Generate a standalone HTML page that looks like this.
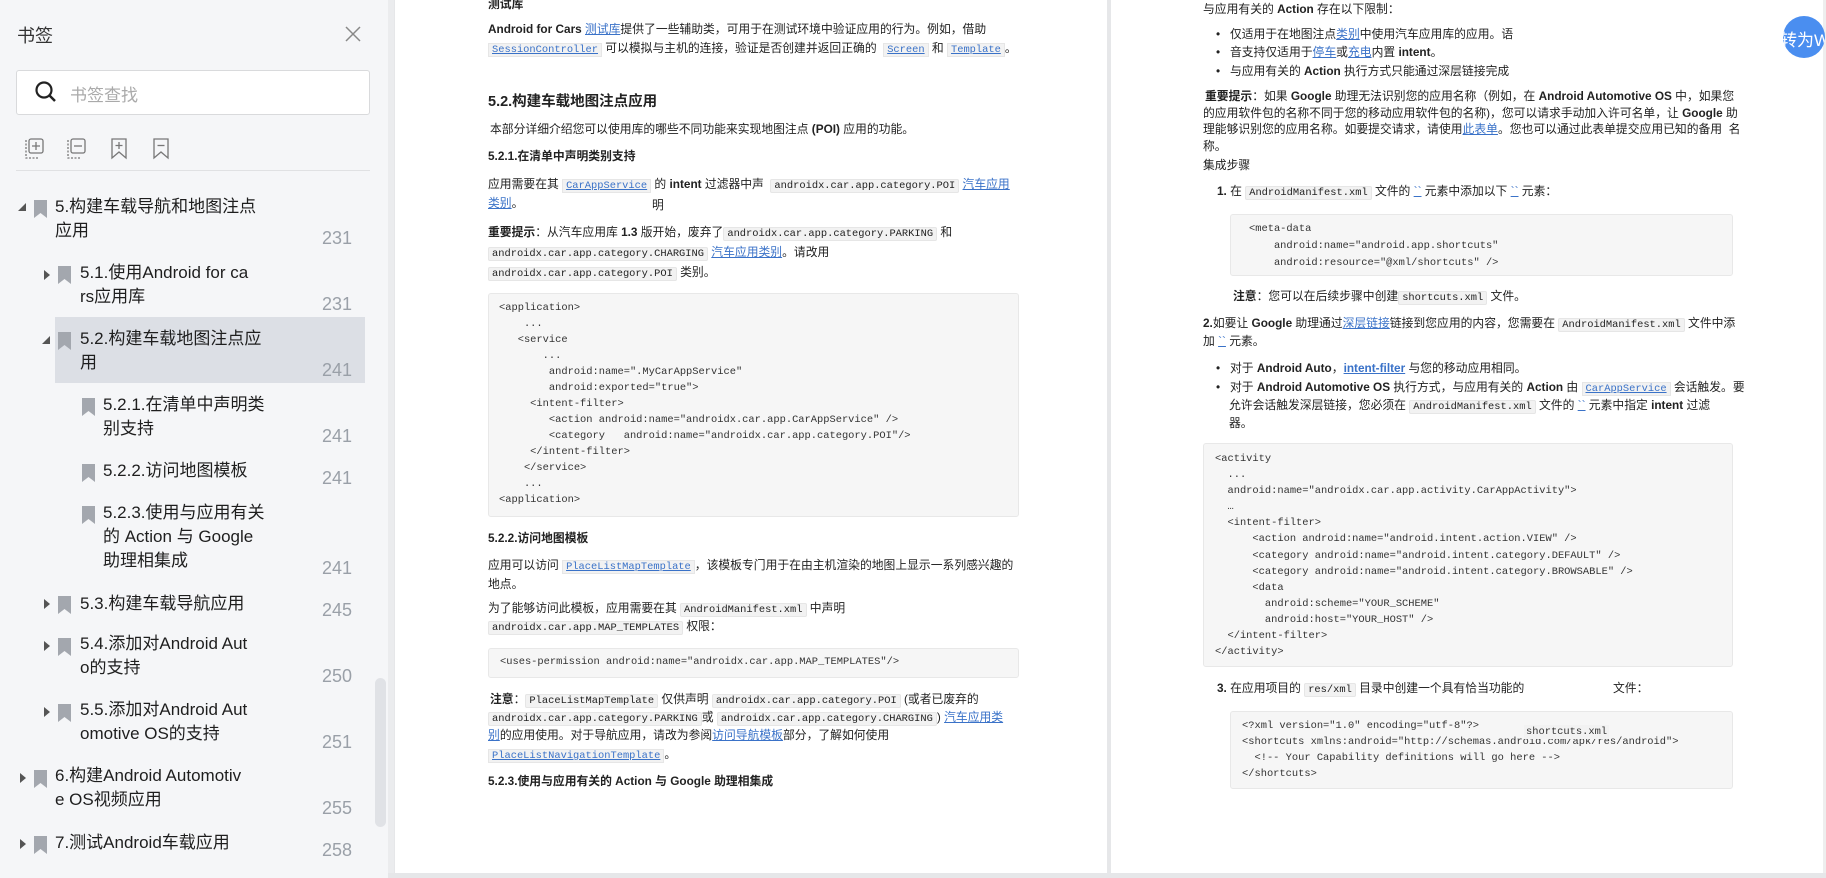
<!DOCTYPE html>
<html><head><meta charset="utf-8"><style>
*{margin:0;padding:0;box-sizing:border-box}
body{width:1826px;height:878px;overflow:hidden;background:#e6e7e9;position:relative;font-family:"Liberation Sans","Noto Sans CJK SC",sans-serif;color:#222}
.a{position:absolute;white-space:nowrap}
#side{position:absolute;left:0;top:0;width:388px;height:878px;background:#f5f6f8}
.si{font-size:17px;line-height:24px;color:#1e1e1e}
.pn{font-size:18px;color:#9aa0a8}
.tri{width:0;height:0;border-style:solid}
.page{position:absolute;top:0;background:#fff;height:873px}
.l{font-size:11.8px;line-height:17px;color:#222}
.b{font-weight:bold}
.c{font-family:"Liberation Mono",monospace;font-size:10.4px;background:#f2f2f2;border:1px solid #e6e6e6;border-radius:2px;padding:0 3px}
.k{color:#3a72c8;text-decoration:underline}
.ck{font-family:"Liberation Mono",monospace;font-size:10.4px;color:#3a72c8;text-decoration:underline;background:#f2f2f2;border:1px solid #e6e6e6;padding:0 3px}
.cb{position:absolute;background:#f6f6f6;border:1px solid #e8e8e8;border-radius:3px}
.m{font-family:"Liberation Mono",monospace;font-size:10.4px;line-height:14px;color:#333}
.h{font-weight:bold;color:#222}
</style></head><body>
<div id="side">
<div class="a" style="left:17px;top:22px;font-size:18px;color:#333">书签</div>
<svg class="a" style="left:344px;top:25px" width="18" height="18"><path d="M2 2L16 16M16 2L2 16" stroke="#888" stroke-width="1.5"/></svg>
<div class="a" style="left:16px;top:70px;width:354px;height:45px;background:#fff;border:1px solid #d9dadc;border-radius:3px"></div>
<svg class="a" style="left:34px;top:80px" width="24" height="24"><circle cx="10" cy="10" r="7.5" fill="none" stroke="#222" stroke-width="2.2"/><path d="M15.5 15.5L21 21" stroke="#222" stroke-width="2.5"/></svg>
<div class="a" style="left:70px;top:81px;font-size:17px;color:#aaa">书签查找</div>
<svg class="a" style="left:24px;top:137px" width="160" height="24" fill="none" stroke="#777" stroke-width="1.3">
<path d="M2 3v18h13" stroke-dasharray="2 1.5"/><rect x="5" y="2" width="14" height="14" rx="2"/><path d="M12 5v8M8 9h8"/>
<path d="M44 3v18h13" stroke-dasharray="2 1.5"/><rect x="47" y="2" width="14" height="14" rx="2"/><path d="M50 9h8"/>
<path d="M88 2h14v19l-7-6-7 6z"/><path d="M95 5v7M91.5 8.5h7"/>
<path d="M130 2h14v19l-7-6-7 6z"/><path d="M133.5 8.5h7"/>
</svg>
<div class="a" style="left:16px;top:170px;width:354px;height:1px;background:#e0e1e3"></div>
<div class="a" style="left:55px;top:317px;width:310px;height:66px;background:#dcdfe5"></div>
<div class="a tri" style="left:18px;top:203px;border-width:0 0 8px 8px;border-color:transparent transparent #555 transparent"></div>
<svg class="a" style="left:34px;top:200px" width="13" height="18"><path d="M0 0h13v18l-6.5-5L0 18z" fill="#a3a7ae"/></svg>
<div class="a si" style="left:55px;top:195px">5.构建车载导航和地图注点<br>应用</div>
<div class="a pn" style="left:322px;top:228px">231</div>

<div class="a tri" style="left:44px;top:270px;border-width:5px 0 5px 6px;border-color:transparent transparent transparent #555"></div>
<svg class="a" style="left:58px;top:266px" width="13" height="18"><path d="M0 0h13v18l-6.5-5L0 18z" fill="#a3a7ae"/></svg>
<div class="a si" style="left:80px;top:261px">5.1.使用Android for ca<br>rs应用库</div>
<div class="a pn" style="left:322px;top:294px">231</div>

<div class="a tri" style="left:42px;top:336px;border-width:0 0 8px 8px;border-color:transparent transparent #555 transparent"></div>
<svg class="a" style="left:58px;top:332px" width="13" height="18"><path d="M0 0h13v18l-6.5-5L0 18z" fill="#a3a7ae"/></svg>
<div class="a si" style="left:80px;top:327px">5.2.构建车载地图注点应<br>用</div>
<div class="a pn" style="left:322px;top:360px">241</div>

<svg class="a" style="left:82px;top:398px" width="13" height="18"><path d="M0 0h13v18l-6.5-5L0 18z" fill="#a3a7ae"/></svg>
<div class="a si" style="left:103px;top:393px">5.2.1.在清单中声明类<br>别支持</div>
<div class="a pn" style="left:322px;top:426px">241</div>

<svg class="a" style="left:82px;top:464px" width="13" height="18"><path d="M0 0h13v18l-6.5-5L0 18z" fill="#a3a7ae"/></svg>
<div class="a si" style="left:103px;top:459px">5.2.2.访问地图模板</div>
<div class="a pn" style="left:322px;top:468px">241</div>

<svg class="a" style="left:82px;top:506px" width="13" height="18"><path d="M0 0h13v18l-6.5-5L0 18z" fill="#a3a7ae"/></svg>
<div class="a si" style="left:103px;top:501px">5.2.3.使用与应用有关<br>的 Action 与 Google<br>助理相集成</div>
<div class="a pn" style="left:322px;top:558px">241</div>

<div class="a tri" style="left:44px;top:599px;border-width:5px 0 5px 6px;border-color:transparent transparent transparent #555"></div>
<svg class="a" style="left:58px;top:596px" width="13" height="18"><path d="M0 0h13v18l-6.5-5L0 18z" fill="#a3a7ae"/></svg>
<div class="a si" style="left:80px;top:592px">5.3.构建车载导航应用</div>
<div class="a pn" style="left:322px;top:600px">245</div>

<div class="a tri" style="left:44px;top:641px;border-width:5px 0 5px 6px;border-color:transparent transparent transparent #555"></div>
<svg class="a" style="left:58px;top:638px" width="13" height="18"><path d="M0 0h13v18l-6.5-5L0 18z" fill="#a3a7ae"/></svg>
<div class="a si" style="left:80px;top:632px">5.4.添加对Android Aut<br>o的支持</div>
<div class="a pn" style="left:322px;top:666px">250</div>

<div class="a tri" style="left:44px;top:707px;border-width:5px 0 5px 6px;border-color:transparent transparent transparent #555"></div>
<svg class="a" style="left:58px;top:704px" width="13" height="18"><path d="M0 0h13v18l-6.5-5L0 18z" fill="#a3a7ae"/></svg>
<div class="a si" style="left:80px;top:698px">5.5.添加对Android Aut<br>omotive OS的支持</div>
<div class="a pn" style="left:322px;top:732px">251</div>

<div class="a tri" style="left:20px;top:773px;border-width:5px 0 5px 6px;border-color:transparent transparent transparent #555"></div>
<svg class="a" style="left:34px;top:770px" width="13" height="18"><path d="M0 0h13v18l-6.5-5L0 18z" fill="#a3a7ae"/></svg>
<div class="a si" style="left:55px;top:764px">6.构建Android Automotiv<br>e OS视频应用</div>
<div class="a pn" style="left:322px;top:798px">255</div>

<div class="a tri" style="left:20px;top:839px;border-width:5px 0 5px 6px;border-color:transparent transparent transparent #555"></div>
<svg class="a" style="left:34px;top:836px" width="13" height="18"><path d="M0 0h13v18l-6.5-5L0 18z" fill="#a3a7ae"/></svg>
<div class="a si" style="left:55px;top:831px">7.测试Android车载应用</div>
<div class="a pn" style="left:322px;top:840px">258</div>

<div class="a" style="left:375px;top:678px;width:11px;height:149px;background:#e0e2e6;border-radius:6px"></div>
</div>
<div class="a" style="left:388px;top:0;width:6px;height:878px;background:#ebecee"></div>

<div class="page" style="left:395px;width:712px"></div>
<div class="a l b" style="left:488px;top:-4px">测试库</div>
<div class="a l" style="left:488px;top:21px"><span class="b">Android for Cars</span> <span class="k">测试库</span>提供了一些辅助类，可用于在测试环境中验证应用的行为。例如，借助</div>
<div class="a l" style="left:488px;top:40px"><span class="ck">SessionController</span> 可以模拟与主机的连接，验证是否创建并返回正确的 &nbsp;<span class="ck">Screen</span> 和 <span class="ck">Template</span>。</div>
<div class="a" style="left:488px;top:90px;font-size:14.5px;font-weight:bold;color:#222">5.2.构建车载地图注点应用</div>
<div class="a l" style="left:490px;top:121px">本部分详细介绍您可以使用库的哪些不同功能来实现地图注点 <b>(POI)</b> 应用的功能。</div>
<div class="a l h" style="left:488px;top:148px">5.2.1.在清单中声明类别支持</div>
<div class="a l" style="left:488px;top:176px">应用需要在其 <span class="ck">CarAppService</span> 的 <b>intent</b> 过滤器中声 &nbsp;<span class="c">androidx.car.app.category.POI</span> <span class="k">汽车应用</span></div>
<div class="a l" style="left:488px;top:195px"><span class="k">类别</span>。</div>
<div class="a l" style="left:652px;top:197px">明</div>
<div class="a l" style="left:488px;top:224px"><b>重要提示</b>：从汽车应用库 <b>1.3</b> 版开始，废弃了<span class="c">androidx.car.app.category.PARKING</span> 和</div>
<div class="a l" style="left:488px;top:244px"><span class="c">androidx.car.app.category.CHARGING</span> <span class="k">汽车应用类别</span>。请改用</div>
<div class="a l" style="left:488px;top:264px"><span class="c">androidx.car.app.category.POI</span> 类别。</div>
<div class="cb" style="left:488px;top:293px;width:531px;height:224px"></div>
<div class="a m" style="left:499px;top:300px;line-height:16px">&lt;application&gt;<br>&nbsp;&nbsp;&nbsp;&nbsp;...<br>&nbsp;&nbsp;&nbsp;&lt;service<br>&nbsp;&nbsp;&nbsp;&nbsp;&nbsp;&nbsp;&nbsp;...<br>&nbsp;&nbsp;&nbsp;&nbsp;&nbsp;&nbsp;&nbsp;&nbsp;android:name=".MyCarAppService"<br>&nbsp;&nbsp;&nbsp;&nbsp;&nbsp;&nbsp;&nbsp;&nbsp;android:exported="true"&gt;<br>&nbsp;&nbsp;&nbsp;&nbsp;&nbsp;&lt;intent-filter&gt;<br>&nbsp;&nbsp;&nbsp;&nbsp;&nbsp;&nbsp;&nbsp;&nbsp;&lt;action android:name="androidx.car.app.CarAppService" /&gt;<br>&nbsp;&nbsp;&nbsp;&nbsp;&nbsp;&nbsp;&nbsp;&nbsp;&lt;category &nbsp;&nbsp;android:name="androidx.car.app.category.POI"/&gt;<br>&nbsp;&nbsp;&nbsp;&nbsp;&nbsp;&lt;/intent-filter&gt;<br>&nbsp;&nbsp;&nbsp;&nbsp;&lt;/service&gt;<br>&nbsp;&nbsp;&nbsp;&nbsp;...<br>&lt;application&gt;</div>
<div class="a l h" style="left:488px;top:530px">5.2.2.访问地图模板</div>
<div class="a l" style="left:488px;top:557px">应用可以访问 <span class="ck">PlaceListMapTemplate</span>，该模板专门用于在由主机渲染的地图上显示一系列感兴趣的</div>
<div class="a l" style="left:488px;top:576px">地点。</div>
<div class="a l" style="left:488px;top:600px">为了能够访问此模板，应用需要在其 <span class="c">AndroidManifest.xml</span> 中声明</div>
<div class="a l" style="left:488px;top:618px"><span class="c">androidx.car.app.MAP_TEMPLATES</span> 权限：</div>
<div class="cb" style="left:488px;top:648px;width:531px;height:30px"></div>
<div class="a m" style="left:500px;top:655px">&lt;uses-permission android:name="androidx.car.app.MAP_TEMPLATES"/&gt;</div>
<div class="a l" style="left:490px;top:691px"><b>注意</b>：<span class="c">PlaceListMapTemplate</span> 仅供声明 <span class="c">androidx.car.app.category.POI</span> (或者已废弃的</div>
<div class="a l" style="left:488px;top:709px"><span class="c">androidx.car.app.category.PARKING</span>或 <span class="c">androidx.car.app.category.CHARGING</span>) <span class="k">汽车应用类</span></div>
<div class="a l" style="left:488px;top:727px"><span class="k">别</span>的应用使用。对于导航应用，请改为参阅<span class="k">访问导航模板</span>部分，了解如何使用</div>
<div class="a l" style="left:488px;top:746px"><span class="ck">PlaceListNavigationTemplate</span>。</div>
<div class="a l h" style="left:488px;top:773px">5.2.3.使用与应用有关的 Action 与 Google 助理相集成</div>

<div class="page" style="left:1111px;width:712px"></div>
<div class="a" style="left:1823px;top:0;width:3px;height:878px;background:#eee"></div>
<div class="a l" style="left:1203px;top:1px">与应用有关的 <b>Action</b> 存在以下限制：</div>
<div class="a l" style="left:1216px;top:26px">•&nbsp;&nbsp; 仅适用于在地图注点<span class="k">类别</span>中使用汽车应用库的应用。语</div>
<div class="a l" style="left:1216px;top:44px">•&nbsp;&nbsp; 音支持仅适用于<span class="k">停车</span>或<span class="k">充电</span>内置 <b>intent</b>。</div>
<div class="a l" style="left:1216px;top:63px">•&nbsp;&nbsp; 与应用有关的 <b>Action</b> 执行方式只能通过深层链接完成</div>
<div class="a l" style="left:1205px;top:88px"><b>重要提示</b>：如果 <b>Google</b> 助理无法识别您的应用名称（例如，在 <b>Android Automotive OS</b> 中，如果您</div>
<div class="a l" style="left:1203px;top:105px">的应用软件包的名称不同于您的移动应用软件包的名称)，您可以请求手动加入许可名单，让 <b>Google</b> 助</div>
<div class="a l" style="left:1203px;top:121px">理能够识别您的应用名称。如要提交请求，请使用<span class="k">此表单</span>。您也可以通过此表单提交应用已知的备用 &nbsp;名</div>
<div class="a l" style="left:1203px;top:138px">称。</div>
<div class="a l" style="left:1203px;top:157px">集成步骤</div>
<div class="a l" style="left:1217px;top:183px"><b>1.</b> 在 <span class="c">AndroidManifest.xml</span> 文件的 <span class="k">``</span> 元素中添加以下 <span class="k">``</span> 元素：</div>
<div class="cb" style="left:1230px;top:214px;width:503px;height:62px"></div>
<div class="a m" style="left:1249px;top:221px;line-height:17px">&lt;meta-data<br>&nbsp;&nbsp;&nbsp;&nbsp;android:name="android.app.shortcuts"<br>&nbsp;&nbsp;&nbsp;&nbsp;android:resource="@xml/shortcuts" /&gt;</div>
<div class="a l" style="left:1233px;top:288px"><b>注意</b>：您可以在后续步骤中创建<span class="c">shortcuts.xml</span> 文件。</div>
<div class="a l" style="left:1203px;top:315px"><b>2.</b>如要让 <b>Google</b> 助理通过<span class="k">深层链接</span>链接到您应用的内容，您需要在 <span class="c">AndroidManifest.xml</span> 文件中添</div>
<div class="a l" style="left:1203px;top:333px">加 <span class="k">``</span> 元素。</div>
<div class="a l" style="left:1216px;top:360px">•&nbsp;&nbsp; 对于 <b>Android Auto</b>，<b class="k">intent-filter</b> 与您的移动应用相同。</div>
<div class="a l" style="left:1216px;top:379px">•&nbsp;&nbsp; 对于 <b>Android Automotive OS</b> 执行方式，与应用有关的 <b>Action</b> 由 <span class="ck">CarAppService</span> 会话触发。要</div>
<div class="a l" style="left:1229px;top:397px">允许会话触发深层链接，您必须在 <span class="c">AndroidManifest.xml</span> 文件的 <span class="k">``</span> 元素中指定 <b>intent</b> 过滤</div>
<div class="a l" style="left:1229px;top:415px">器。</div>
<div class="cb" style="left:1203px;top:443px;width:530px;height:224px"></div>
<div class="a m" style="left:1215px;top:451px;line-height:16.1px">&lt;activity<br>&nbsp;&nbsp;...<br>&nbsp;&nbsp;android:name="androidx.car.app.activity.CarAppActivity"&gt;<br>&nbsp;&nbsp;…<br>&nbsp;&nbsp;&lt;intent-filter&gt;<br>&nbsp;&nbsp;&nbsp;&nbsp;&nbsp;&nbsp;&lt;action android:name="android.intent.action.VIEW" /&gt;<br>&nbsp;&nbsp;&nbsp;&nbsp;&nbsp;&nbsp;&lt;category android:name="android.intent.category.DEFAULT" /&gt;<br>&nbsp;&nbsp;&nbsp;&nbsp;&nbsp;&nbsp;&lt;category android:name="android.intent.category.BROWSABLE" /&gt;<br>&nbsp;&nbsp;&nbsp;&nbsp;&nbsp;&nbsp;&lt;data<br>&nbsp;&nbsp;&nbsp;&nbsp;&nbsp;&nbsp;&nbsp;&nbsp;android:scheme="YOUR_SCHEME"<br>&nbsp;&nbsp;&nbsp;&nbsp;&nbsp;&nbsp;&nbsp;&nbsp;android:host="YOUR_HOST" /&gt;<br>&nbsp;&nbsp;&lt;/intent-filter&gt;<br>&lt;/activity&gt;</div>
<div class="a l" style="left:1217px;top:680px"><b>3.</b> 在应用项目的 <span class="c">res/xml</span> 目录中创建一个具有恰当功能的</div>
<div class="a l" style="left:1613px;top:680px">文件：</div>
<div class="cb" style="left:1230px;top:711px;width:503px;height:78px"></div>
<div class="a m" style="left:1242px;top:718px;line-height:16px">&lt;?xml version="1.0" encoding="utf-8"?&gt;<br>&lt;shortcuts xmlns:android="http://schemas.android.com/apk/res/android"&gt;<br>&nbsp;&nbsp;&lt;!-- Your Capability definitions will go here --&gt;<br>&lt;/shortcuts&gt;</div>
<div class="a m" style="left:1524px;top:725px;background:#f2f2f2;padding:0 2px">shortcuts.xml</div>

<div class="a" style="left:1783px;top:16px;width:42px;height:42px;border-radius:50%;background:#4a8ef0;overflow:hidden"><div class="a" style="left:-3px;top:10px;color:#fff;font-size:17px">转为W</div></div>
<div class="a" style="left:0;top:873px;width:1826px;height:5px;background:#e6e7e9"></div>
<div class="a" style="left:0;top:873px;width:388px;height:5px;background:#f5f6f8"></div>
</body></html>
